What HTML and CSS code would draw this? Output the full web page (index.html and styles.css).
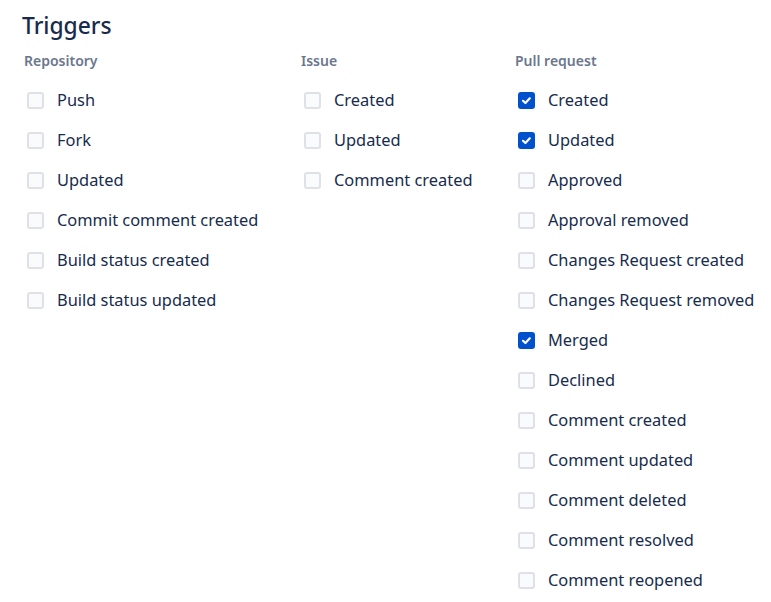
FILE: index.html
```html
<!DOCTYPE html>
<html>
<head>
<meta charset="utf-8">
<link rel="stylesheet" href="styles.css">
</head>
<body>
<div class="page">
  <h1 class="title">Triggers</h1>
  <div class="columns">
    <div class="col">
      <div class="col-head">Repository</div>
      <label class="row"><span class="box"></span><span class="label">Push</span></label>
      <label class="row"><span class="box"></span><span class="label">Fork</span></label>
      <label class="row"><span class="box"></span><span class="label">Updated</span></label>
      <label class="row"><span class="box"></span><span class="label">Commit comment created</span></label>
      <label class="row"><span class="box"></span><span class="label">Build status created</span></label>
      <label class="row"><span class="box"></span><span class="label">Build status updated</span></label>
    </div>
    <div class="col">
      <div class="col-head">Issue</div>
      <label class="row"><span class="box"></span><span class="label">Created</span></label>
      <label class="row"><span class="box"></span><span class="label">Updated</span></label>
      <label class="row"><span class="box"></span><span class="label">Comment created</span></label>
    </div>
    <div class="col">
      <div class="col-head">Pull request</div>
      <label class="row"><span class="box checked"><svg viewBox="0 0 17 17" width="17" height="17"><path d="M5 8.8 L7.4 11 L11.8 6.3" fill="none" stroke="#fff" stroke-width="2.2" stroke-linecap="round" stroke-linejoin="round"/></svg></span><span class="label">Created</span></label>
      <label class="row"><span class="box checked"><svg viewBox="0 0 17 17" width="17" height="17"><path d="M5 8.8 L7.4 11 L11.8 6.3" fill="none" stroke="#fff" stroke-width="2.2" stroke-linecap="round" stroke-linejoin="round"/></svg></span><span class="label">Updated</span></label>
      <label class="row"><span class="box"></span><span class="label">Approved</span></label>
      <label class="row"><span class="box"></span><span class="label">Approval removed</span></label>
      <label class="row"><span class="box"></span><span class="label">Changes Request created</span></label>
      <label class="row"><span class="box"></span><span class="label">Changes Request removed</span></label>
      <label class="row"><span class="box checked"><svg viewBox="0 0 17 17" width="17" height="17"><path d="M5 8.8 L7.4 11 L11.8 6.3" fill="none" stroke="#fff" stroke-width="2.2" stroke-linecap="round" stroke-linejoin="round"/></svg></span><span class="label">Merged</span></label>
      <label class="row"><span class="box"></span><span class="label">Declined</span></label>
      <label class="row"><span class="box"></span><span class="label">Comment created</span></label>
      <label class="row"><span class="box"></span><span class="label">Comment updated</span></label>
      <label class="row"><span class="box"></span><span class="label">Comment deleted</span></label>
      <label class="row"><span class="box"></span><span class="label">Comment resolved</span></label>
      <label class="row"><span class="box"></span><span class="label">Comment reopened</span></label>
    </div>
  </div>
</div>
</body>
</html>
```
FILE: styles.css
```css
html, body {
  margin: 0;
  padding: 0;
  background: #ffffff;
}
.page {
  padding: 12px 0 0 22px;
  font-family: "Noto Sans", "Open Sans", sans-serif;
  color: #172B4D;
}
.title {
  margin: 0;
  font-size: 22.8px;
  line-height: 28px;
  font-weight: 500;
  color: #172B4D;
}
.columns {
  display: grid;
  grid-template-columns: 277px 214px auto;
  margin-left: 2px;
  margin-top: 11px;
}
.col {
  display: flex;
  flex-direction: column;
}
.col-head {
  font-size: 14px;
  line-height: 20px;
  font-weight: 600;
  color: #6B778C;
  margin-bottom: 9px;
}
.row {
  display: flex;
  align-items: center;
  height: 40px;
  padding-left: 3px;
}
.box {
  box-sizing: border-box;
  width: 17px;
  height: 17px;
  border: 2px solid #DFE1E6;
  background: #FAFBFC;
  border-radius: 3px;
  flex: none;
  position: relative;
}
.box.checked {
  border: none;
  background: #0052CC;
}
.box svg {
  display: block;
}
.label {
  margin-left: 13px;
  font-size: 16.4px;
  line-height: 20px;
  color: #172B4D;
}
```
